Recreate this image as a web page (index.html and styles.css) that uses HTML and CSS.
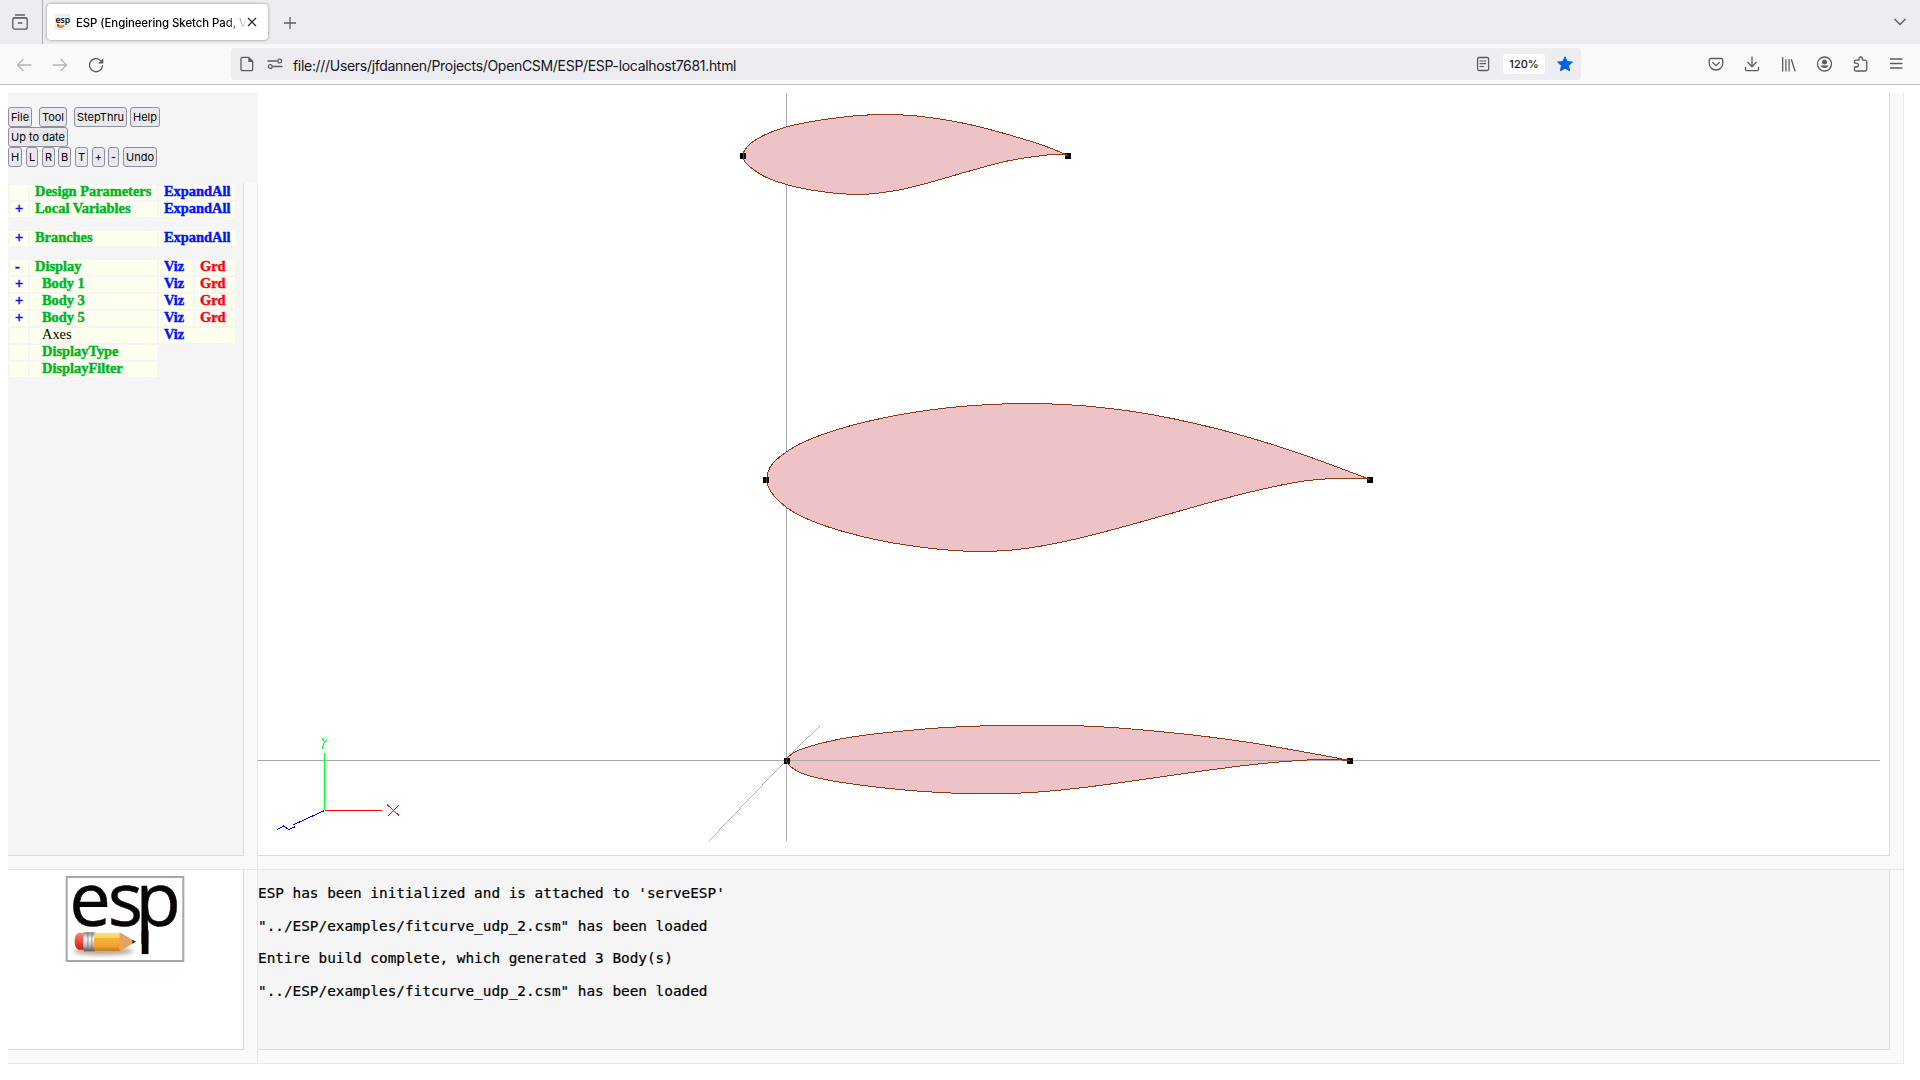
FILE: index.html
```
<!DOCTYPE html>
<html lang="en">
<head>
<meta charset="utf-8">
<title>ESP (Engineering Sketch Pad)</title>
<link rel="stylesheet" href="styles.css">
</head>
<body>
<header class="tabs">
  <div class="recent"><svg class="ico" viewBox="0 0 16 16"><path d="M3.5 1h9M1.5 3.8h13"/><rect x=".8" y="3.8" width="14.4" height="11.4" rx="2"/><path d="M6.3 9h3.6"/></svg></div>
  <div class="tab">
    <svg class="favicon" viewBox="0 0 16 16"><rect width="16" height="16" fill="#eeeeef"/><text class="fav-text" x="0.5" y="8.5" textLength="14.5" lengthAdjust="spacingAndGlyphs">esp</text><path d="M2.500 11.500q3 2.500 6.500 0" stroke="#e58b28" stroke-width="2.600" fill="none"/><path d="M2 11.300h2" stroke="#d33" stroke-width="2"/></svg>
    <span class="tab-title">ESP (Engineering Sketch Pad, V1</span>
    <svg class="close" viewBox="0 0 10 10"><path d="M1 1l8 8M9 1l-8 8"/></svg>
  </div>
  <svg class="plus" viewBox="0 0 12 12"><path d="M6 0v12M0 6h12"/></svg>
  <svg class="chevron" viewBox="0 0 12 8"><path d="M.5 1L6 6.5L11.5 1"/></svg>
</header>
<nav class="toolbar">
  <div class="nav-icons">
    <svg class="ico dim" viewBox="0 0 16 16"><path d="M15 8H1.5M7 2.5L1.5 8L7 13.5"/></svg>
    <svg class="ico dim" viewBox="0 0 16 16"><path d="M1 8h13.5M9 2.5L14.500 8L9 13.500"/></svg>
    <svg class="ico" viewBox="0 0 16 16"><path d="M12.500 3.500A6.500 6.500 0 1 0 14.500 8.600"/><path class="solid" d="M15.300 1.200v5.300H10z"/></svg>
  </div>
  <div class="urlbar">
    <svg class="ico" viewBox="0 0 16 16"><path d="M3.500 1.300h6L13.700 5.500v7.700a1.500 1.500 0 0 1-1.500 1.500H3.500A1.500 1.500 0 0 1 2 13.200V2.800a1.500 1.500 0 0 1 1.500-1.500z"/><path class="solid" d="M9.300 1v5h5z"/></svg>
    <svg class="ico perms" viewBox="0 0 16 16"><path d="M1 5h8.500M6.500 10.500H15"/><circle cx="12.700" cy="5" r="1.900"/><circle cx="3.300" cy="10.500" r="1.900"/></svg>
    <span class="url">file:///Users/jfdannen/Projects/OpenCSM/ESP/ESP-localhost7681.html</span>
    <svg class="ico reader" viewBox="0 0 16 16"><rect x="2.600" y="1.500" width="11" height="13" rx="1.500"/><path d="M5 5h6M5 7.700h5.500M5 10.500h3.500" stroke-width="1.200"/></svg>
    <span class="zoom">120%</span>
    <svg class="star" viewBox="0 0 16 16"><path d="M8 .8l2.200 4.700 5.200.6-3.900 3.500 1.100 5.200L8 12.200l-4.600 2.600 1.100-5.200L.6 6.100l5.200-.6z"/></svg>
  </div>
  <div class="actions">
    <svg class="ico" viewBox="0 0 16 16"><path d="M2.700 2.500h10.600A1.500 1.500 0 0 1 14.800 4v3.200a6.800 6.800 0 0 1-13.600 0V4a1.500 1.500 0 0 1 1.500-1.500z"/><path d="M4.700 6.500L8 9.600l3.300-3.100"/></svg>
    <svg class="ico" viewBox="0 0 16 16"><path d="M8 .8v9.700M3.800 6.500L8 10.700l4.200-4.200M1.500 11.500v1.700a1.500 1.500 0 0 0 1.500 1.500h10a1.500 1.500 0 0 0 1.500-1.500v-1.700"/></svg>
    <svg class="ico" viewBox="0 0 16 16"><path d="M2.700 1.500V15M5.900 3.700V15M9.100 3.700V15M11.500 3.700L15 15"/></svg>
    <svg class="ico" viewBox="0 0 16 16"><circle cx="8.500" cy="8" r="7"/><circle class="solid" cx="8.500" cy="5.900" r="2.500"/><path class="solid" d="M4.400 9.500h8.200a4.300 3.600 0 0 1-8.200 0z"/></svg>
    <svg class="ico" viewBox="0 0 16 16"><path d="M2.500 7V5.500A1.300 1.300 0 0 1 3.800 4.200H7V2.700a1.700 1.700 0 0 1 3.400 0v1.500h2.800A1.500 1.500 0 0 1 14.700 5.700v8A1.500 1.500 0 0 1 13.200 15H3.800a1.300 1.300 0 0 1-1.300-1.300V11h2a1.900 1.900 0 0 0 0-3.800z"/></svg>
    <svg class="ico" viewBox="0 0 16 16"><path d="M2.500 3h11.500M2.500 7.500h11.500M2.500 12h11.500"/></svg>
  </div>
</nav>
<main class="page">
  <section class="side">
    <div class="buttons">
      <div class="brow"><button class="btn w24">File</button><button class="btn w28 gap7">Tool</button><button class="btn w53 gap7">StepThru</button><button class="btn w30 gap3">Help</button></div>
      <div class="brow"><button class="btn w60">Up to date</button></div>
      <div class="brow"><button class="btn w14">H</button><button class="btn w12 gap4">L</button><button class="btn w13 gap4">R</button><button class="btn w13 gap3">B</button><button class="btn w13 gap4">T</button><button class="btn w13 gap4">+</button><button class="btn w11 gap3">-</button><button class="btn w34 gap4">Undo</button></div>
    </div>
    <div class="tree-frame">
      <div class="tree">
        <div class="trow"><b class="sign"></b><b class="name">Design Parameters</b><b class="wide">ExpandAll</b></div>
        <div class="trow"><b class="sign">+</b><b class="name">Local Variables</b><b class="wide">ExpandAll</b></div>
        <div class="trow group"><b class="sign">+</b><b class="name">Branches</b><b class="wide">ExpandAll</b></div>
        <div class="trow group"><b class="sign">-</b><b class="name">Display</b><b class="viz">Viz</b><b class="grd">Grd</b></div>
        <div class="trow"><b class="sign">+</b><b class="name sub">Body 1</b><b class="viz">Viz</b><b class="grd">Grd</b></div>
        <div class="trow"><b class="sign">+</b><b class="name sub">Body 3</b><b class="viz">Viz</b><b class="grd">Grd</b></div>
        <div class="trow"><b class="sign">+</b><b class="name sub">Body 5</b><b class="viz">Viz</b><b class="grd">Grd</b></div>
        <div class="trow"><b class="sign"></b><span class="name sub plain">Axes</span><b class="wide">Viz</b></div>
        <div class="trow"><b class="sign"></b><b class="name sub">DisplayType</b></div>
        <div class="trow"><b class="sign"></b><b class="name sub">DisplayFilter</b></div>
      </div>
    </div>
  </section>
  <section class="view frame">
    <svg class="scene" viewBox="258 93 1631 762">
      <g class="axis"><path d="M786.500 93V841M258 760.500H1880"/><path class="thin" d="M709 841L783.500 763M786 758.500L820 726"/></g>
      <g id="fills"></g>
      <path class="axis" d="M790 760.500H1347"/>
      <g id="outlines"></g>
      <g class="triad">
        <path stroke="#00ff28" d="M324.500 753v57M322.500 737.500v1.500l2.500 3M327 740.500l-2.500 1.500l-2.500 6.500"/>
        <path stroke="#ff0018" d="M325 810.500h57"/>
        <path stroke="#e0142c" d="M387 804.500l12 11M399 805l-11 11"/>
        <path stroke="#0000ff" d="M324.500 810.500L293 825M295.500 826.500l-6.500 3l-5.500-3.500l-6 3.500"/>
      </g>
    </svg>
  </section>
  <section class="logo frame">
    <svg class="esp" viewBox="0 0 120 87">
      <defs>
        <linearGradient id="wood" x2="0" y2="1"><stop offset="0" stop-color="#fbe07c"/><stop offset=".28" stop-color="#fbd45c"/><stop offset=".3" stop-color="#f9b23a"/><stop offset=".75" stop-color="#f0a42c"/><stop offset="1" stop-color="#c97512"/></linearGradient>
        <linearGradient id="rubber" x2="0" y2="1"><stop offset="0" stop-color="#f58a78"/><stop offset=".5" stop-color="#ee4a3c"/><stop offset="1" stop-color="#b82820"/></linearGradient>
        <linearGradient id="metal" x2="0" y2="1"><stop offset="0" stop-color="#888"/><stop offset=".35" stop-color="#fff"/><stop offset=".7" stop-color="#bbb"/><stop offset="1" stop-color="#555"/></linearGradient>
        <filter id="soft" x="-20%" y="-80%" width="140%" height="260%"><feGaussianBlur stdDeviation="2.200"/></filter>
      </defs>
      <rect class="border" x="1" y="1" width="118" height="85"/>
      <text class="letters" y="51" x="3.500 42.500 70.500">esp</text>
      <rect x="76.900" y="55" width="6.900" height="24" fill="#0a0505"/>
      <ellipse cx="38" cy="76" rx="30" ry="4" fill="#8a6a50" opacity=".6" filter="url(#soft)"/>
      <path fill="url(#rubber)" d="M19 57.500h-6q-4 2-4 8.500t4 8.500h6z"/>
      <path fill="url(#metal)" d="M18.500 57h11v19h-11q-2-9 0-19z"/>
      <path d="M22.500 57v18.500M26.500 57v18.500" stroke="#777" stroke-width=".8"/>
      <path fill="url(#wood)" d="M29.500 57.500h26v18h-26q-2-9 0-18z"/>
      <path fill="#e2a365" d="M55.500 57.500L71 66.500L55.500 75.500q-3-3-1-6q-2-4 0-7q-1-3 1-5z"/>
      <path fill="#222" d="M67.500 64.500l3.500 2-3.500 2z"/>
    </svg>
  </section>
  <section class="log frame">
    <div class="messages">
      <p>ESP has been initialized and is attached to 'serveESP'</p>
      <p>"../ESP/examples/fitcurve_udp_2.csm" has been loaded</p>
      <p>Entire build complete, which generated 3 Body(s)</p>
      <p>"../ESP/examples/fitcurve_udp_2.csm" has been loaded</p>
    </div>
  </section>
</main>
<script src="foils.js"></script>
</body>
</html>
```
FILE: styles.css
```
* { box-sizing: border-box; }
body { margin: 0; width: 1920px; height: 1080px; overflow: hidden; background: #fff; color: #000; font-family: Inter, "Liberation Sans", sans-serif; }
svg { display: block; flex: none; }
.ico { width: 16px; height: 16px; fill: none; stroke: #5b5b66; stroke-width: 1.3; stroke-linecap: round; stroke-linejoin: round; }
.ico .solid { fill: #5b5b66; stroke: none; }
.dim { stroke: #b4b4ba; }

.tabs { display: flex; align-items: center; height: 44px; background: #ededf1; }
.recent { width: 43px; height: 44px; padding: 14px 0 0 12px; border-right: 1px solid #adadb3; }
.tab { display: flex; align-items: center; width: 221px; height: 36px; margin-left: 4px; padding-left: 8px; border-radius: 4px; background: #fff; box-shadow: 0 0 3px rgba(0,0,0,.45); }
.favicon { width: 16px; height: 16px; }
.fav-text { font: 600 9px "Open Sans", sans-serif; }
.tab-title { width: 170px; margin-left: 5px; overflow: hidden; white-space: nowrap; font-size: 11.4px; font-weight: 500; line-height: 18px; letter-spacing: -.06px; padding-top: 1px; -webkit-mask-image: linear-gradient(90deg, #000 148px, transparent 172px); mask-image: linear-gradient(90deg, #000 148px, transparent 172px); }
.close { width: 10px; height: 10px; margin-left: 1px; fill: none; stroke: #222; stroke-width: 1.2; }
.plus { width: 12px; height: 12px; margin: 2px 0 0 16px; stroke: #5b5b66; stroke-width: 1.3; }
.chevron { width: 12px; height: 8px; margin: 0 14px 0 auto; fill: none; stroke: #5b5b66; stroke-width: 1.5; }

.toolbar { display: flex; height: 41px; background: #f9f9fb; border-bottom: 1px solid #c4c4c8; padding-top: 4px; }
.nav-icons { display: flex; gap: 20px; width: 231px; padding: 9px 0 0 16px; }
.urlbar { display: flex; align-items: center; width: 1350px; height: 32px; padding: 0 8px; border-radius: 4px; background: #ededf1; }
.perms { margin-left: 12px; }
.url { margin: 2px auto 0 10px; font-size: 14px; letter-spacing: -.31px; color: #15141a; white-space: nowrap; }
.zoom { width: 42px; height: 20px; margin: 0 12px; border-radius: 3px; background: #fff; font-size: 11px; font-weight: 500; line-height: 20px; text-align: center; color: #15141a; }
.star { width: 16px; height: 16px; fill: #0061e0; stroke: #0061e0; stroke-linejoin: round; }
.actions { display: flex; gap: 20px; margin-left: 127px; padding-top: 8px; }

.page { display: grid; grid-template-columns: 250px 1646px; grid-template-rows: 777px 194px; margin: 8px 0 0 8px; }
.frame { border-right: 1px solid #e8e8e8; border-bottom: 1px solid #e8e8e8; background: #f9f9f9; }
.side { display: flex; flex-direction: column; border-bottom: 1px solid #e8e8e8; }
.buttons { height: 90px; padding-top: 14px; background: #f5f5f5; }
.brow { display: flex; height: 20px; }
.btn { height: 20px; padding: 0; border: 1px solid #8f8f9d; border-radius: 3px; background: #e9e9ed; color: #000; font: 11px/18px Inter, sans-serif; white-space: nowrap; text-align: center; }
.w11 { width: 11px; } .w12 { width: 12px; } .w13 { width: 13px; } .w14 { width: 14px; }
.w24 { width: 24px; } .w28 { width: 28px; } .w30 { width: 30px; } .w34 { width: 34px; }
.w53 { width: 53px; } .w60 { width: 60px; }
.gap3 { margin-left: 3px; } .gap4 { margin-left: 4px; } .gap7 { margin-left: 7px; }
.tree-frame { flex: 1; padding: 0 14px 13px 0; border-right: 1px solid #e8e8e8; background: #f9f9f9; }
.tree { width: 236px; height: 100%; padding: 2px 0 0 2px; border-right: 1px solid #ddd; border-bottom: 1px solid #ddd; background: #f5f5f5; }
.trow { display: flex; gap: 2px; height: 15px; margin-bottom: 2px; font: 14.4px/13px "Liberation Serif", serif; }
.trow > * { height: 15px; background: #ffffee; padding-left: 5px; white-space: nowrap; }
.trow b { -webkit-text-stroke: .45px currentColor; }
.group { margin-top: 14px; }
.trow .sign { width: 18px; color: #0014ff; }
.trow .name { width: 127px; color: #00b428; }
.trow .sub { padding-left: 12px; }
.trow .plain { color: #000; }
.trow .wide { width: 76px; color: #0014ff; }
.trow .viz { width: 34px; color: #0014ff; }
.trow .grd { width: 40px; color: #ff0018; }

.view { padding: 0 13px 13px 0; }
.scene { width: 1632px; height: 763px; border-right: 1px solid #ddd; border-bottom: 1px solid #ddd; background: #fff; shape-rendering: crispEdges; }
.axis { fill: none; stroke: #a9a9a9; stroke-width: 1; }
.thin { stroke: #999; stroke-width: .75; }
.triad { fill: none; }
.foil-fill { fill: #edc3c8; }
.foil-edge { fill: none; stroke: #8b3a14; stroke-width: 1; }
.logo { padding: 0 14px 13px 0; }
.esp { width: 236px; height: 180px; padding: 6px 58px 87px 57px; background: #fff; border-right: 1px solid #ddd; border-bottom: 1px solid #ddd; }
.border { fill: #fff; stroke: #a2a7ac; stroke-width: 2; }
.letters { font: 75px "Open Sans", sans-serif; fill: #0a0505; stroke: #0a0505; stroke-width: .5; }
.log { padding: 0 13px 13px 0; }
.messages { width: 1632px; height: 180px; padding-top: 14px; background: #f5f5f5; border-right: 1px solid #ddd; border-bottom: 1px solid #ddd; }
.log p { margin: 0; height: 32.6px; font: 14.4px/18px "DejaVu Sans Mono", monospace; letter-spacing: -.02px; white-space: pre; -webkit-text-stroke: .2px #000; }
```
FILE: foils.js
```
// Each airfoil: upper surface from leading to trailing edge, then lower surface back.
const foils = [
  { marks: [[740, 153], [1065, 153]],
    upper: [[743.5,156],[743.8,152],[750.5,143.5],[765.5,134.5],[786.7,126.8],[813.5,121.2],[833.5,118.3],[853,116],[871.7,114.8],[885,114.5],[899,114.8],[916.5,116],[940,119],[966.7,123.9],[1000,132.3],[1033.5,142.2],[1050,147.9],[1068,155.5]],
    lower: [[1062,154.6],[1050,154.8],[1036.5,156.3],[1020,158.7],[1000,162.7],[966.7,171.8],[933.5,181.4],[906.7,188.4],[886.5,192],[873.5,193.6],[858.3,194.5],[840,193.6],[826.7,192.3],[806.7,189.2],[786.5,184.5],[766.5,177.5],[750,167],[743.8,160]] },
  { marks: [[763, 477], [1367, 477]],
    upper: [[766.5,480],[767.8,473],[771.5,465],[780.8,456],[799,444.3],[824,434],[849.5,426],[879,418.9],[908.5,413.2],[950.5,407.5],[988.3,404.6],[1030.4,403.5],[1070.4,404.9],[1097.7,407.2],[1135.6,411.9],[1173.5,418.8],[1219.8,429.5],[1261.9,441.3],[1304,455],[1337.6,467.2],[1370,479.5]],
    lower: [[1365,478.6],[1342,478.5],[1325,479],[1304,481],[1283,484.7],[1245,493.3],[1203,504.4],[1160.9,516.3],[1118.8,528],[1076.7,538.8],[1038.8,546.5],[1009.4,550.2],[977.8,551.5],[942,549.5],[908.4,545.4],[879,540.3],[849.4,533.2],[824,525.5],[803,517],[786.3,507.3],[773.7,495.5],[768.2,486.7]] },
  { marks: [[784, 758], [1347, 758]],
    upper: [[786.5,761],[789,756],[799.4,750],[817.2,744.3],[841.8,738.7],[868.6,734.7],[904.3,730.9],[940,727.9],[982.9,725.9],[1032,725.2],[1081,725.9],[1118.6,728],[1163.2,731.9],[1207.9,736.8],[1252.5,743],[1297,750.7],[1332.9,757.2],[1350,760.5]],
    lower: [[1333,759.6],[1315,759.6],[1288,761.3],[1252.5,764.6],[1207.9,770.2],[1163,776.6],[1118.6,782.9],[1082.9,787.6],[1047,791.3],[1019.5,793.1],[984.6,793.7],[957.9,793.3],[922,791.4],[886.4,788.2],[850.7,783.7],[824,779.3],[801.6,773.3],[789.5,765.7]] }
];

// Smooth segment list through the points (Catmull-Rom as cubic Beziers).
function spline(p) {
  let d = "";
  for (let i = 0; i < p.length - 1; i++) {
    const a = p[Math.max(i - 1, 0)], b = p[i], c = p[i + 1], e = p[Math.min(i + 2, p.length - 1)];
    d += `C${b[0] + (c[0] - a[0]) / 6} ${b[1] + (c[1] - a[1]) / 6} ${c[0] - (e[0] - b[0]) / 6} ${c[1] - (e[1] - b[1]) / 6} ${c[0]} ${c[1]}`;
  }
  return d;
}

function outline(f) {
  const start = f.upper[0], end = f.upper[f.upper.length - 1];
  return `M${start}` + spline(f.upper) + spline([end, ...f.lower, start]) + "Z";
}

document.getElementById("fills").innerHTML = foils.map(f => `<path class="foil-fill" d="${outline(f)}"/>`).join("");
document.getElementById("outlines").innerHTML = foils.map(f =>
  f.marks.map(m => `<rect x="${m[0]}" y="${m[1]}" width="6" height="6"/>`).join("") +
  `<path class="foil-edge" d="${outline(f)}"/>`).join("");
```
